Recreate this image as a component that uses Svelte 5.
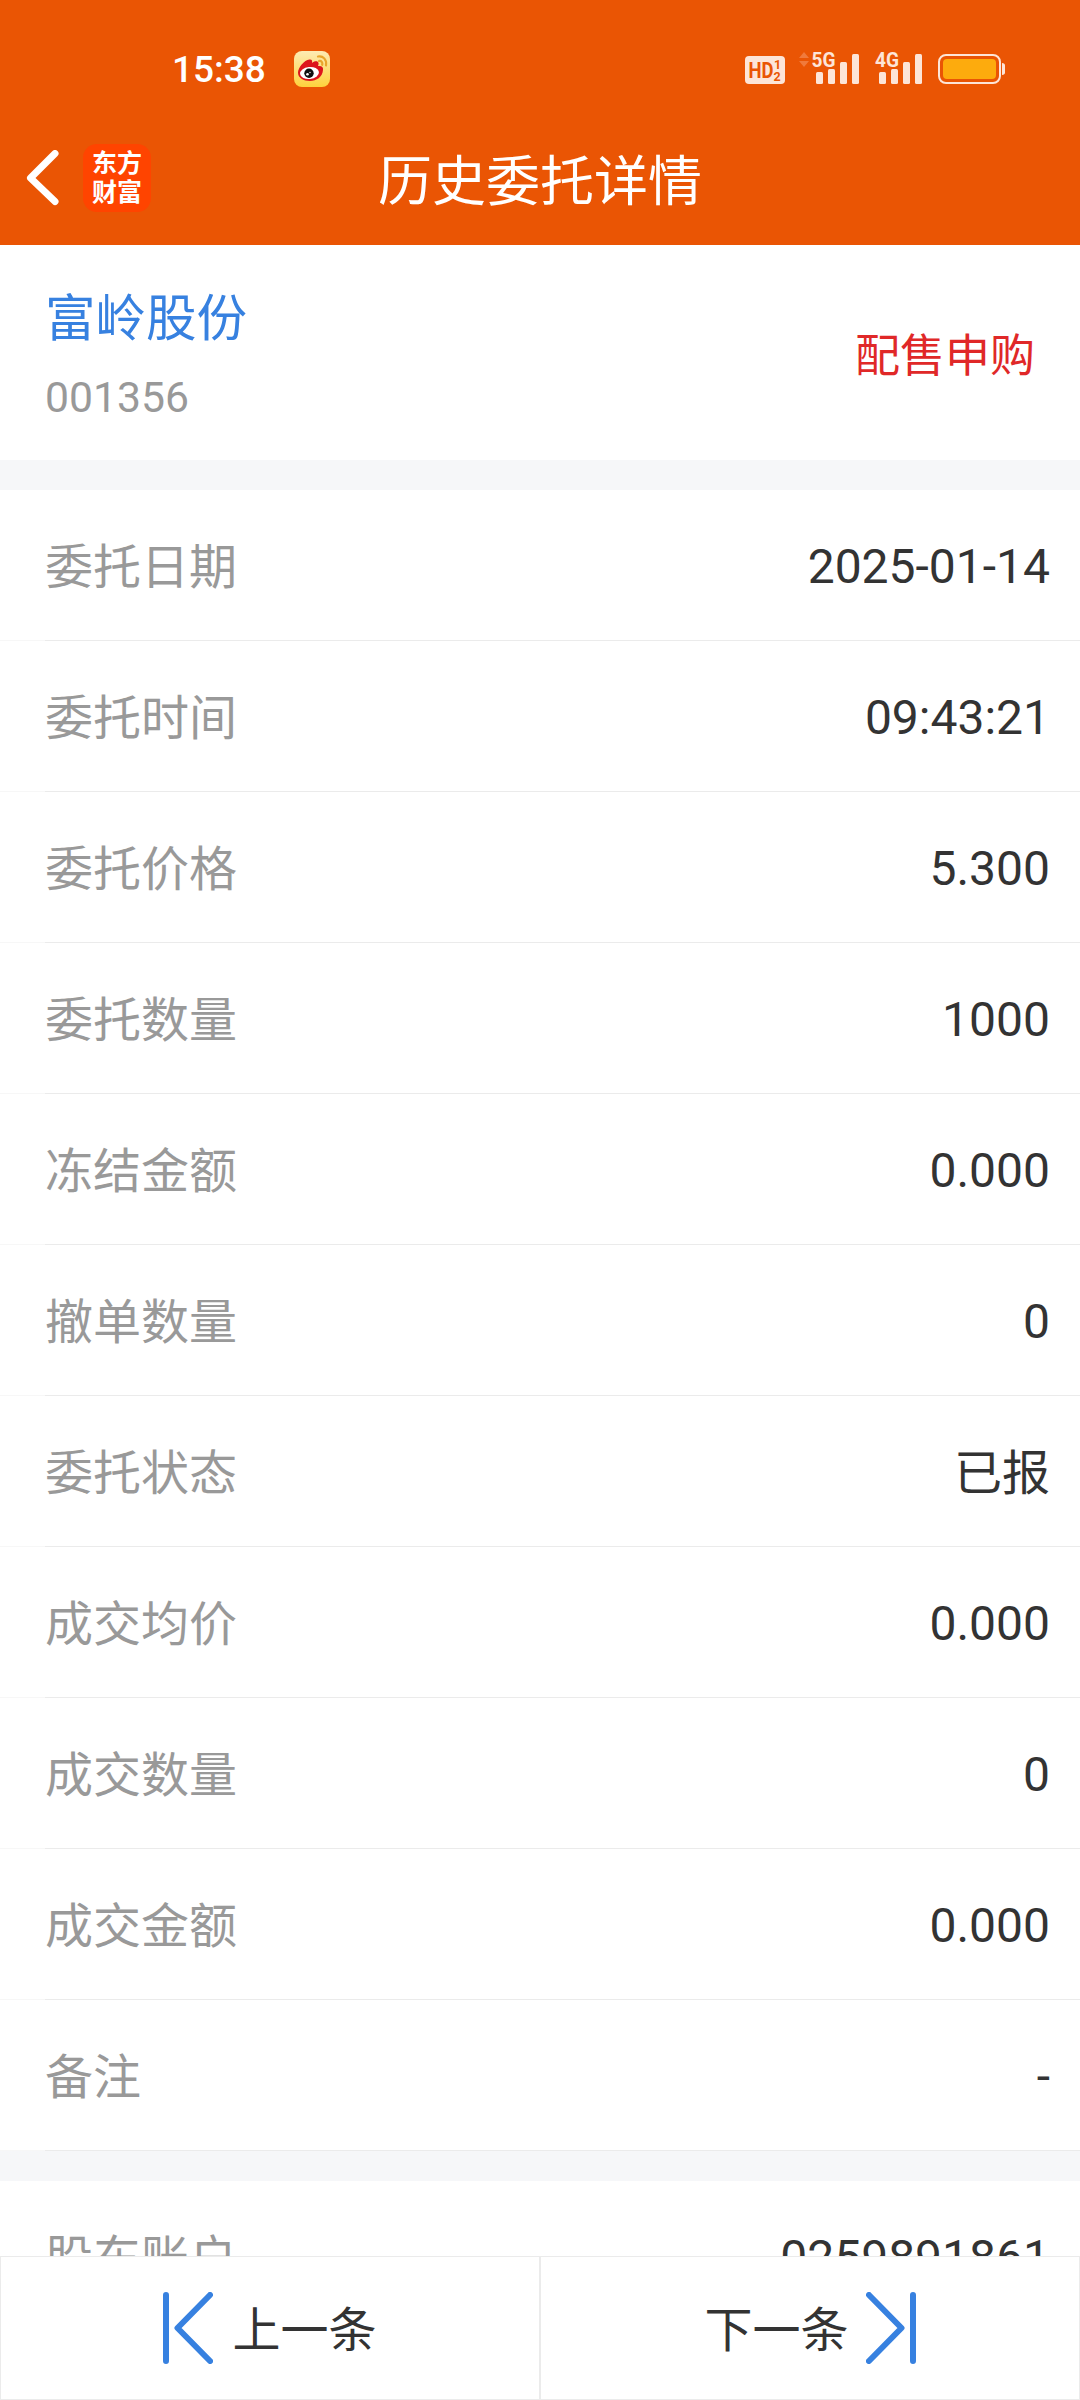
<script lang="ts">
  type Row = { label: string; value: string; cjk?: boolean };

  let rows: Row[] = [
    { label: "委托日期", value: "2025-01-14" },
    { label: "委托时间", value: "09:43:21" },
    { label: "委托价格", value: "5.300" },
    { label: "委托数量", value: "1000" },
    { label: "冻结金额", value: "0.000" },
    { label: "撤单数量", value: "0" },
    { label: "委托状态", value: "已报", cjk: true },
    { label: "成交均价", value: "0.000" },
    { label: "成交数量", value: "0" },
    { label: "成交金额", value: "0.000" },
    { label: "备注", value: "-" },
  ];

  let account: Row[] = [{ label: "股东账户", value: "0259891861" }];
</script>

<div class="screen" lang="zh-CN">
  <header>
    <div class="status">
      <span class="time">15:38</span>
      <svg class="weibo" width="36" height="36" viewBox="0 0 36 36">
        <defs>
          <linearGradient id="weibo-bg" x1="0" y1="0" x2="0" y2="1">
            <stop offset="0" stop-color="#fdebb4" />
            <stop offset="1" stop-color="#fed23c" />
          </linearGradient>
        </defs>
        <rect width="36" height="36" rx="8" fill="url(#weibo-bg)" />
        <path d="M4 21.500C4 17 10 9 15.500 8.500c2.500-.3 3 1.500 2.500 3.500 2-2 6-2.500 6.500 0 .3 1.500-.5 2.500-.5 3 3.500-.5 5.500 1 5 4C28.500 26 22.500 30 16 30S4 27 4 21.500z" fill="#dd141c" />
        <ellipse cx="15.500" cy="22" rx="9.500" ry="6" fill="#fff" transform="rotate(-6 15.500 22)" />
        <circle cx="15" cy="22.300" r="4.700" fill="#111" />
        <circle cx="13.500" cy="23.300" r="1.300" fill="#fff" />
        <circle cx="16" cy="21.500" r=".7" fill="#fff" />
        <path d="M24 5.500c5-1 9 3 8 9M25 10c2.500-.5 3.800 1.500 3.200 3.800" fill="none" stroke="#e9a52c" stroke-width="2.200" stroke-linecap="round" />
      </svg>

      <svg class="signals" width="261" height="52" viewBox="0 -9 261 52" fill="#fde5d8">
        <rect x="0" y="4" width="40" height="28" rx="4" />
        <g class="hd">
          <text x="3.500" y="26" font-size="22" textLength="25" lengthAdjust="spacingAndGlyphs">HD</text>
          <text x="29" y="17" font-size="12.500">1</text>
          <text x="28.500" y="29" font-size="12.500">2</text>
        </g>
        <path d="M54 6l5-6 5 6zM54 9l5 6 5-6z" fill="#f07a3c" />
        <g class="net">
          <text x="66.500" y="15" font-size="21" textLength="24" lengthAdjust="spacingAndGlyphs">5G</text>
          <text x="130" y="15" font-size="21" textLength="24" lengthAdjust="spacingAndGlyphs">4G</text>
        </g>
        {#each [71, 134] as x}
          <rect {x} y="20" width="7" height="12" rx="1.500" />
          <rect x={x + 12} y="17" width="7" height="15" rx="1.500" />
          <rect x={x + 24} y="10" width="7" height="22" rx="1.500" />
          <rect x={x + 36} y="2" width="7" height="30" rx="1.500" />
        {/each}
        <rect x="194" y="3" width="61" height="28" rx="7" fill="none" stroke="#fde5d8" stroke-width="2" />
        <rect x="198" y="7" width="53" height="20" rx="4" fill="#fdab0d" />
        <path d="M257 11c2 0 3 1 3 2.500v7c0 1.500-1 2.500-3 2.500z" />
      </svg>
    </div>

    <div class="nav">
      <svg class="back" width="33" height="56" viewBox="0 0 33 56">
        <path d="M29 3.500L4.500 28 29 51.500" fill="none" stroke="#fff" stroke-width="7" stroke-linecap="round" stroke-linejoin="round" />
      </svg>
      <div class="logo"><span>东方</span><span>财富</span></div>
      <h1>历史委托详情</h1>
    </div>
  </header>

  <section class="stock">
    <div>
      <div class="name">富岭股份</div>
      <div class="code">001356</div>
    </div>
    <span class="kind">配售申购</span>
  </section>

  <div class="list">
    {#each rows as row}
      <div class="row">
        <span class="label cjk">{row.label}</span>
        <span class="value" class:cjk={row.cjk}>{row.value}</span>
      </div>
    {/each}
  </div>

  <div class="list rest">
    {#each account as row}
      <div class="row">
        <span class="label cjk">{row.label}</span>
        <span class="value" class:cjk={row.cjk}>{row.value}</span>
      </div>
    {/each}
  </div>

  <footer>
    <button>
      <svg width="50" height="72" viewBox="0 0 50 72">
        <path d="M3 3v66M47 3L14.500 36 47 69" />
      </svg>
      <span>上一条</span>
    </button>
    <button class="next">
      <span>下一条</span>
      <svg width="50" height="72" viewBox="0 0 50 72">
        <path d="M47 3v66M3 3l32.500 33L3 69" />
      </svg>
    </button>
  </footer>
</div>

<style>
  :global(body) {
    background: #f6f7f9;
  }

  .screen {
    display: flex;
    flex-direction: column;
    width: 1080px;
    height: 2400px;
    overflow: hidden;
    background: #f6f7f9;
    color: #333;
    font-family: Roboto, "Noto Sans CJK SC", sans-serif;
  }

  header {
    flex: none;
    height: 245px;
    background: #ea5504;
    color: #fff;
  }

  .status {
    display: flex;
    align-items: center;
    height: 138px;
    box-sizing: border-box;
    padding: 0 74px 0 172px;
  }

  .time {
    width: 122px;
    padding-top: 2px;
    font-size: 37px;
    font-weight: 500;
    line-height: 40px;
  }

  .signals {
    margin-left: auto;
  }

  .signals text {
    font-family: Roboto, sans-serif;
    font-weight: 700;
  }

  .signals .hd {
    fill: #ea5504;
  }

  .nav {
    display: grid;
    grid-template-columns: 57px 68px 1fr 151px;
    align-items: center;
    height: 80px;
    padding: 0 0 0 26px;
  }

  .logo {
    display: flex;
    flex-direction: column;
    justify-content: center;
    align-items: center;
    width: 68px;
    height: 68px;
    border-radius: 14px;
    background: #ff4400;
    font-size: 25px;
    font-weight: 700;
    line-height: 29px;
  }

  h1 {
    margin: 0;
    padding-top: 10px;
    text-align: center;
    font-size: 54px;
    font-weight: 400;
    line-height: 70px;
  }

  .stock {
    display: flex;
    flex: none;
    justify-content: space-between;
    align-items: center;
    height: 215px;
    box-sizing: border-box;
    padding: 0 45px;
    background: #fff;
  }

  .name {
    padding-top: 9px;
    color: #3781e0;
    font-size: 50.5px;
    line-height: 80px;
  }

  .code {
    color: #999;
    font-size: 42.7px;
    line-height: 76px;
  }

  .kind {
    color: #e02828;
    font-size: 45px;
  }

  .list {
    flex: none;
    margin-top: 30px;
    background: #fff;
  }

  .rest {
    flex: 1;
    min-height: 0;
    overflow: hidden;
  }

  .row {
    display: flex;
    justify-content: space-between;
    align-items: center;
    height: 151px;
    box-sizing: border-box;
    padding: 0 30px 0 45px;
    background: linear-gradient(to right, #f7f7f7 45px, #ebebeb 45px) bottom / 100% 1px no-repeat;
    font-size: 48px;
    line-height: 72px;
  }

  .label {
    color: #999;
  }

  .value {
    padding-top: 3px;
  }

  .cjk {
    padding-top: 5px;
  }

  footer {
    display: flex;
    flex: none;
    height: 144px;
    background: #fff;
  }

  button {
    display: flex;
    flex: 1;
    justify-content: center;
    align-items: center;
    gap: 19px;
    padding: 0;
    border: 1px solid #ebebeb;
    background: #fff;
    color: #333;
    font: inherit;
    font-size: 48px;
    line-height: 72px;
  }

  button.next {
    gap: 17px;
  }

  button span {
    padding-top: 5px;
  }

  button path {
    fill: none;
    stroke: #3781e0;
    stroke-width: 6;
    stroke-linecap: round;
    stroke-linejoin: round;
  }
</style>
